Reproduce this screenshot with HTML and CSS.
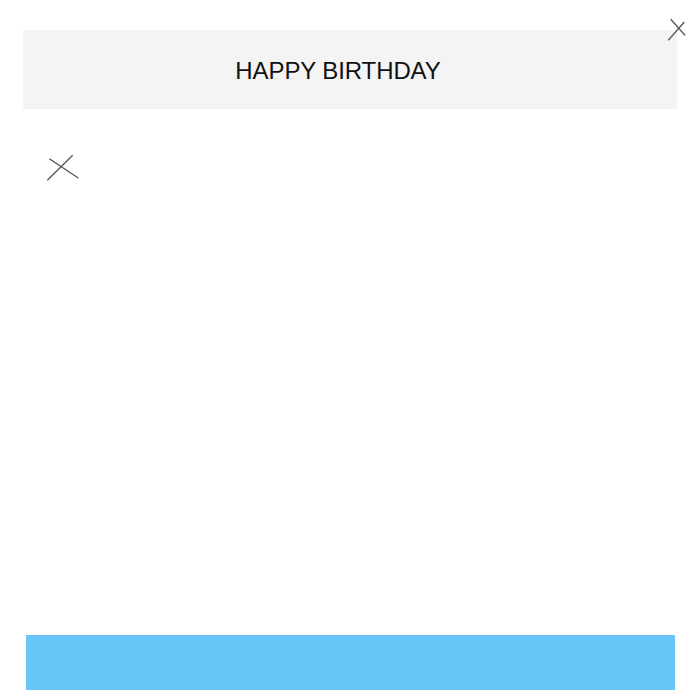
FILE: index.html
```html
<!DOCTYPE html>
<html>
<head>
<meta charset="utf-8">
<link rel="stylesheet" href="styles.css">
</head>
<body>
<div class="page">
  <svg class="close-top" width="28" height="28" viewBox="0 0 28 28">
    <line x1="6.7" y1="3.3" x2="21" y2="19.3" />
    <line x1="20.3" y1="6" x2="4.3" y2="24.3" />
  </svg>
  <div class="header">HAPPY BIRTHDAY</div>
  <div class="content">
    <svg class="close-inline" width="36" height="30" viewBox="0 0 36 30">
      <line x1="3.3" y1="4.7" x2="32.3" y2="24" />
      <line x1="26.7" y1="1.3" x2="1.3" y2="26.3" />
    </svg>
  </div>
  <div class="bar"></div>
</div>
</body>
</html>
```
FILE: styles.css
```css
html, body {
  margin: 0;
  padding: 0;
  background: #ffffff;
}
.page {
  position: relative;
  height: 700px;
  box-sizing: border-box;
  padding: 30px 23px 10px 23px;
  display: flex;
  flex-direction: column;
  font-family: "Liberation Sans", Arial, sans-serif;
}
.close-top {
  position: absolute;
  left: 664px;
  top: 16px;
}
.close-top line,
.close-inline line {
  stroke: #555555;
  stroke-width: 1.3;
}
.header {
  height: 79px;
  box-sizing: border-box;
  padding: 2px 24px 0 0;
  background: #f4f4f4;
  display: flex;
  align-items: center;
  justify-content: center;
  font-size: 24px;
  color: #111111;
  letter-spacing: -0.1px;
}
.content {
  flex: 1;
  padding: 45px 0 0 23px;
}
.close-inline {
  display: block;
}
.bar {
  height: 55px;
  margin: 0 2px 0 3px;
  background: #67c5f7;
}
```
